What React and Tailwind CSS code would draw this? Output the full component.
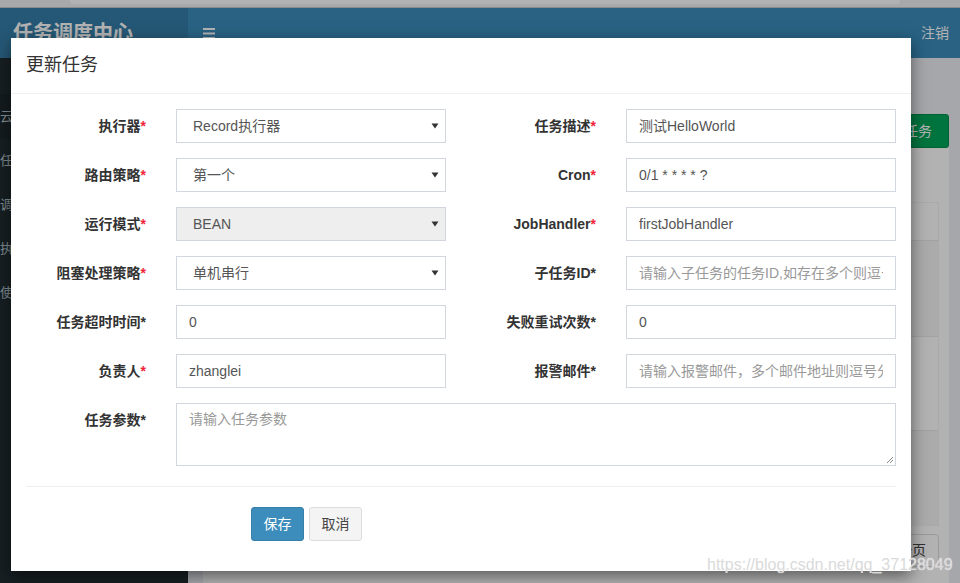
import React from "react";

const FONT = "font-['Liberation_Sans','Noto_Sans_CJK_SC',sans-serif]";

function Label({ text, red }) {
  return (
    <div className="pr-[15px] pt-[7px] text-right text-[14px] leading-[20px] font-bold text-[#333]">
      {text}
      <span className={red ? "text-[#f0253a]" : "text-[#333]"}>*</span>
    </div>
  );
}

function Field({ value, placeholder, select, disabled }) {
  return (
    <div className="px-[15px]">
      <div
        className={`h-[34px] border border-[#d2d6de] flex items-center justify-between text-[14px] ${
          disabled ? "bg-[#eeeeee]" : "bg-white"
        } ${select ? "pl-[16px] pr-[6px]" : "px-[12px]"}`}
      >
        <span className={`whitespace-nowrap overflow-hidden ${value ? "text-[#555]" : "text-[#999]"}`}>
          {value || placeholder}
        </span>
        {select && (
          <svg width="8" height="6" viewBox="0 0 8 6" className="shrink-0">
            <path d="M0.5 0.5 L7.5 0.5 L4 5.5 Z" fill="#333" />
          </svg>
        )}
      </div>
    </div>
  );
}

const rows = [
  [
    { label: "执行器", red: true, value: "Record执行器", select: true },
    { label: "任务描述", red: true, value: "测试HelloWorld" },
  ],
  [
    { label: "路由策略", red: true, value: "第一个", select: true },
    { label: "Cron", red: true, value: "0/1 * * * * ?" },
  ],
  [
    { label: "运行模式", red: true, value: "BEAN", select: true, disabled: true },
    { label: "JobHandler", red: true, value: "firstJobHandler" },
  ],
  [
    { label: "阻塞处理策略", red: true, value: "单机串行", select: true },
    { label: "子任务ID", placeholder: "请输入子任务的任务ID,如存在多个则逗号分隔" },
  ],
  [
    { label: "任务超时时间", value: "0" },
    { label: "失败重试次数", value: "0" },
  ],
  [
    { label: "负责人", red: true, value: "zhanglei" },
    { label: "报警邮件", placeholder: "请输入报警邮件，多个邮件地址则逗号分隔" },
  ],
];

function Background() {
  return (
    <div className="flex flex-col h-full">
      {/* browser strip */}
      <div className="h-[8px] bg-[#f1f3f4] border-b border-[#c8c8c8] flex">
        <div className="ml-[70px] w-[830px] h-[4px] bg-white rounded-b-[6px]" />
      </div>

      {/* top header */}
      <div className="h-[50px] flex">
        <div className="w-[188px] bg-[#367fa9] text-white text-[20px] font-bold pl-[13px] flex items-center">
          任务调度中心
        </div>
        <div className="flex-1 bg-[#3c8dbc] flex items-center justify-between pl-[15px] pr-[11px]">
          <svg width="12" height="11" viewBox="0 0 12 11">
            <rect x="0" y="0" width="12" height="2" fill="#fff" />
            <rect x="0" y="4.5" width="12" height="2" fill="#fff" />
            <rect x="0" y="9" width="12" height="2" fill="#fff" />
          </svg>
          <span className="text-white text-[14px]">注销</span>
        </div>
      </div>

      <div className="flex-1 flex">
        {/* sidebar */}
        <div className="w-[188px] bg-[#222d32] text-[#b8c7ce] text-[13px] pt-[36px]">
          <div className="h-[45px] bg-[#1e282c] flex items-center">云</div>
          <div className="h-[44px] flex items-center">任</div>
          <div className="h-[44px] flex items-center">调</div>
          <div className="h-[44px] flex items-center">执</div>
          <div className="h-[44px] flex items-center">使</div>
        </div>

        {/* content */}
        <div className="flex-1 flex flex-col pl-[15px] pr-[11px] pt-[56px]">
          <div className="flex justify-end">
            <div className="h-[34px] w-[90px] bg-[#00a65a] border border-[#008d4c] rounded-[3px] text-white text-[14px] flex items-center justify-center">
              新增任务
            </div>
          </div>
          <div className="flex-1 bg-white px-[10px] pt-[54px]">
            <div className="border border-[#f4f4f4]">
              <div className="h-[38px] border-b border-[#e8e8e8] bg-white" />
              <div className="h-[96px] border-b border-[#e8e8e8] bg-[#f5f5f5]" />
              <div className="h-[94px] border-b border-[#e8e8e8] bg-white" />
              <div className="h-[94px] bg-[#f5f5f5]" />
            </div>
            <div className="flex justify-end mt-[8px]">
              <div className="h-[33px] px-[12px] border border-[#ddd] rounded-[4px] text-[14px] text-[#444] flex items-center">
                下一页
              </div>
            </div>
          </div>
        </div>
      </div>
    </div>
  );
}

export default function App() {
  return (
    <div className={`relative w-[960px] h-[583px] overflow-hidden bg-[#ecf0f5] ${FONT}`}>
      <Background />

      {/* backdrop */}
      <div className="absolute inset-0 bg-black/30" />

      {/* modal */}
      <div className="absolute left-[11px] top-[38px] w-[900px] bg-white shadow-[0_5px_15px_rgba(0,0,0,0.5)]">
        <div className="h-[56px] px-[15px] border-b border-[#f0f0f0] flex items-center">
          <h4 className="text-[18px] text-[#333]">更新任务</h4>
        </div>

        <div className="pt-[15px] pb-[30px]">
          <div className="flex flex-col gap-[15px]">
            {rows.map((r, i) => (
              <div key={i} className="grid grid-cols-[150px_300px_150px_300px]">
                <Label text={r[0].label} red={r[0].red} />
                <Field {...r[0]} />
                <Label text={r[1].label} red={r[1].red} />
                <Field {...r[1]} />
              </div>
            ))}

            <div className="grid grid-cols-[150px_750px]">
              <Label text="任务参数" />
              <div className="px-[15px]">
                <div className="relative h-[63px] border border-[#d2d6de] px-[12px] py-[5px] text-[14px] text-[#999]">
                  请输入任务参数
                  <svg width="8" height="8" viewBox="0 0 8 8" className="absolute right-[1px] bottom-[1px]">
                    <path d="M7 1 L1 7 M7 4 L4 7" stroke="#888" strokeWidth="1" />
                  </svg>
                </div>
              </div>
            </div>
          </div>

          <div className="mx-[15px] mt-[20px] border-t border-[#eeeeee]" />

          <div className="mt-[20px] pl-[240px] flex gap-[5px]">
            <button className="h-[34px] w-[53px] bg-[#3c8dbc] border border-[#367fa9] rounded-[3px] text-white text-[14px]">
              保存
            </button>
            <button className="h-[34px] w-[53px] bg-[#f4f4f4] border border-[#dddddd] rounded-[3px] text-[#444] text-[14px]">
              取消
            </button>
          </div>
        </div>
      </div>

      {/* watermark */}
      <div className="absolute left-[707px] top-[553px] text-[16px] text-[#dadada] [text-shadow:0_0_1px_rgba(255,255,255,0.8)]">
        https://blog.csdn.net/qq_37128049
      </div>
    </div>
  );
}
